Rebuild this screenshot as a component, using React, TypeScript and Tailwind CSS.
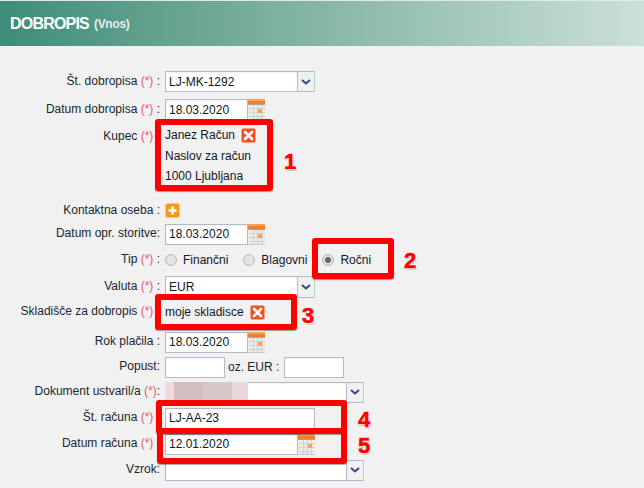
import type { ReactNode } from "react"

/** calendar button next to date inputs */
function CalendarIcon() {
  return (
    <svg width="18" height="21" viewBox="0 0 18 21" className="shrink-0">
      <rect x="0" y="0" width="17" height="21" fill="#ebebe8" />
      <rect x="0" y="0" width="17" height="2" fill="#f5a25e" />
      <rect x="0" y="2" width="17" height="3" fill="#f07f2c" />
      <path d="M0 5.5h17" stroke="#a5a5a0" strokeWidth="1" />
      <path d="M1 9.5h16M1 13.5h16M1 17.5h16M5.5 6v14M9.5 6v14M13.5 6v14" stroke="#d2d2cd" strokeWidth="1" />
      <rect x="10" y="10" width="4" height="4" fill="#f5a25e" />
      <path d="M0 20.5h17" stroke="#c9c9c5" strokeWidth="1" />
    </svg>
  )
}

function RemoveIcon() {
  return (
    <svg width="15" height="15" viewBox="0 0 15 15" className="shrink-0">
      <rect x="0.5" y="0.5" width="14" height="14" rx="2" fill="#f04e23" stroke="#f6a27e" />
      <path d="M4 4l7 7M11 4l-7 7" stroke="#fff" strokeWidth="2.6" strokeLinecap="round" />
    </svg>
  )
}

function AddIcon() {
  return (
    <svg width="15" height="15" viewBox="0 0 15 15" className="shrink-0">
      <rect x="0.5" y="0.5" width="14" height="14" rx="2" fill="#f29a1f" stroke="#f8c67a" />
      <path d="M7.5 3.5v8M3.5 7.5h8" stroke="#fff" strokeWidth="2.6" />
    </svg>
  )
}

function Row({
  label,
  req,
  colon = " :",
  className = "",
  labelClass = "pb-[2px]",
  children,
}: {
  label: string
  req?: boolean
  colon?: string
  className?: string
  labelClass?: string
  children: ReactNode
}) {
  return (
    <div className={`grid grid-cols-[165px_1fr] ${className}`}>
      <div className={`pr-[5px] self-center text-right whitespace-pre text-[#1c2530] ${labelClass}`}>
        {label}
        {req && <span className="text-[#f4546c]"> (*)</span>}
        {colon}
      </div>
      <div className="flex items-center">{children}</div>
    </div>
  )
}

function TextBox({ value, className = "" }: { value?: string; className?: string }) {
  return (
    <div
      className={`h-full flex items-center pl-[3px] bg-white border border-[#b5b8c8] text-[#111827] shadow-[inset_0_1px_2px_rgba(0,0,0,0.05)] ${className}`}
    >
      {value}
    </div>
  )
}

function SelectBox({ value, width, children }: { value?: string; width: string; children?: ReactNode }) {
  return (
    <div className={`relative flex h-full ${width}`}>
      <TextBox value={value} className="flex-1 border-r-0" />
      {children}
      <div className="w-[18px] flex items-center justify-center bg-[#f0f0f0] border border-[#b5b8c8] border-r-[#a5dcc0]">
        <svg width="10" height="6" viewBox="0 0 10 6">
          <path d="M1 1l4 3.5L9 1" fill="none" stroke="#2f4a86" strokeWidth="2" />
        </svg>
      </div>
    </div>
  )
}

function DateBox({ value, width = "w-[83px]" }: { value: string; width?: string }) {
  return (
    <div className="flex h-full">
      <TextBox value={value} className={width} />
      <CalendarIcon />
    </div>
  )
}

function Radio({ checked, label, className = "" }: { checked?: boolean; label: string; className?: string }) {
  return (
    <div className={`flex items-center gap-[6px] ${className}`}>
      <span className="w-[12px] h-[12px] rounded-full bg-[#e4e4e4] border border-[#b4b4b4] flex items-center justify-center">
        {checked && <span className="w-[6px] h-[6px] rounded-full bg-[#666666]" />}
      </span>
      {label}
    </div>
  )
}

/** red annotation frames drawn on top of the screenshot */
function Frame({ className }: { className: string }) {
  return <div className={`absolute border-[6px] border-[#fe0000] rounded-[3px] shadow-[0_1px_1px_rgba(0,0,0,0.35)] ${className}`} />
}

function Digit({ n, className }: { n: string; className: string }) {
  return (
    <span
      className={`absolute text-[22px] leading-none font-bold text-[#fe0000] [-webkit-text-stroke:0.6px_#fe0000] [font-family:'Liberation_Sans',sans-serif] [text-shadow:-1px_0_#fff,1px_0_#fff,0_-1px_#fff,0_1px_#fff,-1px_1px_#ddd,1px_2px_#ccc] ${className}`}
    >
      {n}
    </span>
  )
}

export default function App() {
  return (
    <div className="relative w-[644px] h-[488px] overflow-hidden bg-[#f1f1f1] text-xs [font-family:'Liberation_Sans',Arial,sans-serif]">
      <div className="h-[46px] flex items-center pl-[10px] gap-[5px] border-t border-[#dfe9e6] bg-gradient-to-r from-[#3d8d78] to-[#cbe0da] text-white">
        <span className="text-[16px] font-bold tracking-[-0.8px]">DOBROPIS</span>
        <span className="text-xs font-bold text-[#e3efec] tracking-[-0.3px] mt-px">(Vnos)</span>
      </div>

      <div className="pt-[25px]">
        <Row label="Št. dobropisa" req className="h-[21px]">
          <div className="h-[21px]">
            <SelectBox value="LJ-MK-1292" width="w-[150px] h-[21px]" />
          </div>
        </Row>
        <Row label="Datum dobropisa" req className="h-[21px] mt-[7px]">
          <div className="h-[21px]">
            <DateBox value="18.03.2020" />
          </div>
        </Row>
        <Row label="Kupec" req colon="  " labelClass="self-start! pt-[3px]" className="mt-[5px]">
          <div className="leading-[20.5px] text-[#111827]">
            <div className="flex items-center gap-[6px]">
              Janez Račun <RemoveIcon />
            </div>
            <div>Naslov za račun</div>
            <div>1000 Ljubljana</div>
          </div>
        </Row>
        <Row label="Kontaktna oseba" className="h-[22px] mt-[13px]">
          <AddIcon />
        </Row>
        <Row label="Datum opr. storitve:" colon="" className="h-[21px] mt-[2px]">
          <div className="h-[21px]">
            <DateBox value="18.03.2020" />
          </div>
        </Row>
        <Row label="Tip" req className="h-[21px] mt-[5px]">
          <div className="flex items-center text-[#111827]">
            <Radio label="Finančni" />
            <Radio label="Blagovni" className="ml-[15px]" />
            <Radio checked label="Ročni" className="ml-[15px]" />
          </div>
        </Row>
        <Row label="Valuta" req className="h-[22px] mt-[5px]">
          <div className="h-[22px]">
            <SelectBox value="EUR" width="w-[150px] h-[22px]" />
          </div>
        </Row>
        <Row label="Skladišče za dobropis" req colon="  " className="h-[21px] mt-[4px]">
          <div className="flex items-center gap-[6px] text-[#111827]">
            moje skladisce <RemoveIcon />
          </div>
        </Row>
        <Row label="Rok plačila" className="h-[21px] mt-[9px]">
          <div className="h-[21px]">
            <DateBox value="18.03.2020" />
          </div>
        </Row>
        <Row label="Popust:" colon="" className="h-[21px] mt-[4px]">
          <div className="flex items-center h-[21px]">
            <TextBox className="w-[60px]" />
            <span className="ml-[3px] mr-[5px] whitespace-pre text-[#1c2530]">oz. EUR :</span>
            <TextBox className="w-[60px]" />
          </div>
        </Row>
        <Row label="Dokument ustvaril/a" req colon=":" className="h-[21px] mt-[4px]">
          <div className="h-[21px]">
            <SelectBox width="w-[199px] h-[21px]">
              {/* blurred name */}
              <div className="absolute left-0 top-0 w-[83px] h-[21px] flex">
                <div className="w-[9px] bg-[#f0dcdf]" />
                <div className="w-[29px] bg-[#d3bfc2]" />
                <div className="w-[29px] bg-[#d8c8ca]" />
                <div className="w-[16px] bg-[#e8d8da]" />
              </div>
            </SelectBox>
          </div>
        </Row>
        <Row label="Št. računa" req colon="  " className="h-[21px] mt-[5px]">
          <TextBox value="LJ-AA-23" className="w-[150px] h-[21px]" />
        </Row>
        <Row label="Datum računa" req colon="  " className="h-[21px] mt-[5px]">
          <div className="h-[21px]">
            <DateBox value="12.01.2020" width="w-[133px]" />
          </div>
        </Row>
        <Row label="Vzrok:" colon="" className="h-[21px] mt-[5px]">
          <div className="h-[21px]">
            <SelectBox width="w-[199px] h-[21px]" />
          </div>
        </Row>
      </div>

      <Frame className="left-[155px] top-[119px] w-[118px] h-[72px]" />
      <Frame className="left-[312px] top-[238px] w-[82px] h-[41px]" />
      <Frame className="left-[155px] top-[294px] w-[142px] h-[36px]" />
      <Frame className="left-[156px] top-[400px] w-[191px] h-[34px]" />
      <Frame className="left-[157px] top-[428px] w-[190px] h-[36px]" />

      <Digit n="1" className="left-[284px] top-[151px]" />
      <Digit n="2" className="left-[404px] top-[250px]" />
      <Digit n="3" className="left-[302px] top-[305px]" />
      <Digit n="4" className="left-[358px] top-[409px]" />
      <Digit n="5" className="left-[358px] top-[435px]" />
    </div>
  )
}
